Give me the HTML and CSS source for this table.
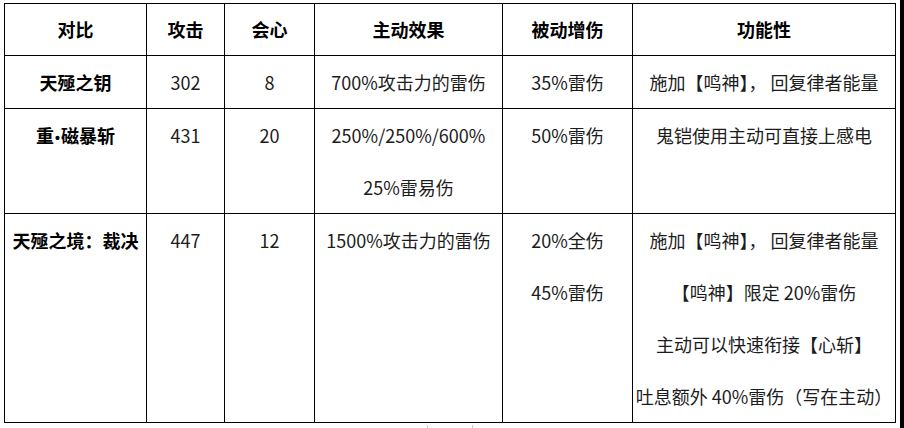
FILE: index.html
```html
<!DOCTYPE html>
<html lang="zh-CN">
<head>
<meta charset="utf-8">
<title>对比</title>
<link rel="stylesheet" href="styles.css">
</head>
<body>
<div class="page">
  <table class="cmp">
    <colgroup>
      <col class="c1"><col class="c2"><col class="c3"><col class="c4"><col class="c5"><col class="c6">
    </colgroup>
    <thead>
      <tr>
        <th>对比</th><th>攻击</th><th>会心</th><th>主动效果</th><th>被动增伤</th><th>功能性</th>
      </tr>
    </thead>
    <tbody>
      <tr>
        <td class="name"><div class="ln">天殛之钥</div></td>
        <td><div class="ln">302</div></td>
        <td><div class="ln">8</div></td>
        <td><div class="ln">700%攻击力的雷伤</div></td>
        <td><div class="ln">35%雷伤</div></td>
        <td><div class="ln">施加【鸣神】， 回复律者能量</div></td>
      </tr>
      <tr>
        <td class="name"><div class="ln">重<span class="dot">•</span>磁暴斩</div></td>
        <td><div class="ln">431</div></td>
        <td><div class="ln">20</div></td>
        <td><div class="ln">250%/250%/600%</div><div class="ln">25%雷易伤</div></td>
        <td><div class="ln">50%雷伤</div></td>
        <td><div class="ln">鬼铠使用主动可直接上感电</div></td>
      </tr>
      <tr>
        <td class="name"><div class="ln">天殛之境：裁决</div></td>
        <td><div class="ln">447</div></td>
        <td><div class="ln">12</div></td>
        <td><div class="ln">1500%攻击力的雷伤</div></td>
        <td><div class="ln">20%全伤</div><div class="ln">45%雷伤</div></td>
        <td>
          <div class="ln">施加【鸣神】， 回复律者能量</div>
          <div class="ln">【鸣神】限定 20%雷伤</div>
          <div class="ln">主动可以快速衔接【心斩】</div>
          <div class="ln">吐息额外 40%雷伤（写在主动）</div>
        </td>
      </tr>
    </tbody>
  </table>
  <div class="tick"></div>
</div>
</body>
</html>
```

FILE: styles.css
```css
html, body {
  margin: 0;
  padding: 0;
  background: #000;
}
.page {
  width: 900px;
  height: 428px;
  background: #fff;
  padding-top: 3px;
  box-sizing: border-box;
  overflow: hidden;
}
.cmp {
  margin-left: 4px;
  width: 892px;
  table-layout: fixed;
  border-collapse: collapse;
  font-family: "Noto Sans CJK SC", "Microsoft YaHei", sans-serif;
  font-size: 18px;
  color: #1c1c1c;
}
.c1 { width: 142px; }
.c2 { width: 78px; }
.c3 { width: 90px; }
.c4 { width: 188px; }
.c5 { width: 130px; }
.c6 { width: 263px; }
.cmp th, .cmp td {
  border: 1px solid #000;
  padding: 0;
  text-align: center;
  vertical-align: top;
  white-space: nowrap;
}
.cmp th {
  font-weight: 700;
  color: #000;
  line-height: 51px;
}
.cmp td.name {
  font-weight: 700;
  color: #000;
}
.dot {
  font-family: "Liberation Sans", sans-serif;
  font-size: 14px;
  padding: 0 1px;
}
.ln {
  line-height: 52px;
  height: 52px;
}
.tick {
  margin: 2px 0 0 427px;
  width: 44px;
  height: 6px;
  border-left: 1px solid #c8c8c8;
  border-right: 1px solid #c8c8c8;
}
```
